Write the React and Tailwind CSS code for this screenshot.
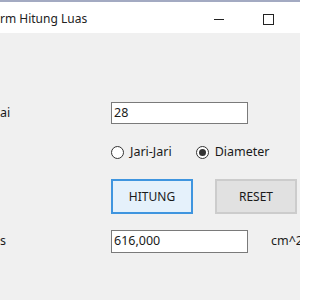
import React from "react";

const font = { fontFamily: '"Segoe UI", "Noto Sans", "Open Sans", sans-serif' };

const Radio = ({ checked, label }) => (
  <label className="flex items-center gap-[6px]">
    <span className="w-[13px] h-[13px] rounded-full border border-[#333333] bg-white flex items-center justify-center">
      {checked && <span className="w-[7px] h-[7px] rounded-full bg-[#333333]" />}
    </span>
    <span>{label}</span>
  </label>
);

const App = () => {
  return (
    <div
      className="w-[300px] h-[300px] overflow-hidden bg-[#f0f0f0] text-[12.5px] text-[#1a1a1a]"
      style={font}
    >
      <div className="h-[2px] bg-[#a3aac2]" />
      {/* title bar */}
      <div className="h-[31px] bg-white flex items-center pt-[3px]">
        <span className="text-[12px] text-[#222]">rm Hitung Luas</span>
        <div className="ml-auto flex items-center">
          <span className="w-[10px] h-px bg-[#222] mr-[39px]" />
          <span className="w-[11px] h-[11px] border border-[#222] mr-[26px]" />
        </div>
      </div>

      {/* form body */}
      <div className="pt-[69px] flex flex-col">
        <div className="flex items-center h-[22px]">
          <span className="w-[111px]">ai</span>
          <div className="w-[137px] h-[22px] border border-[#7a7a7a] bg-white flex items-center px-[2px]">
            28
          </div>
        </div>

        <div className="flex items-center gap-[24px] pl-[111px] mt-[20px] h-[16px]">
          <Radio label="Jari-Jari" />
          <Radio checked label="Diameter" />
        </div>

        <div className="flex gap-[22px] pl-[111px] mt-[19px]">
          <button className="w-[82px] h-[35px] border-2 border-[#3f95df] bg-[#e5f1fb] text-[12px]">
            HITUNG
          </button>
          <button className="w-[82px] h-[35px] border-2 border-[#cccccc] bg-[#e1e1e1] text-[12px]">
            RESET
          </button>
        </div>

        <div className="flex items-center h-[23px] mt-[16px]">
          <span className="w-[111px] shrink-0">s</span>
          <div className="w-[137px] shrink-0 h-[23px] border border-[#7a7a7a] bg-white flex items-center px-[2px]">
            616,000
          </div>
          <span className="ml-[23px] whitespace-nowrap">cm^2</span>
        </div>
      </div>
    </div>
  );
};

export default App;
